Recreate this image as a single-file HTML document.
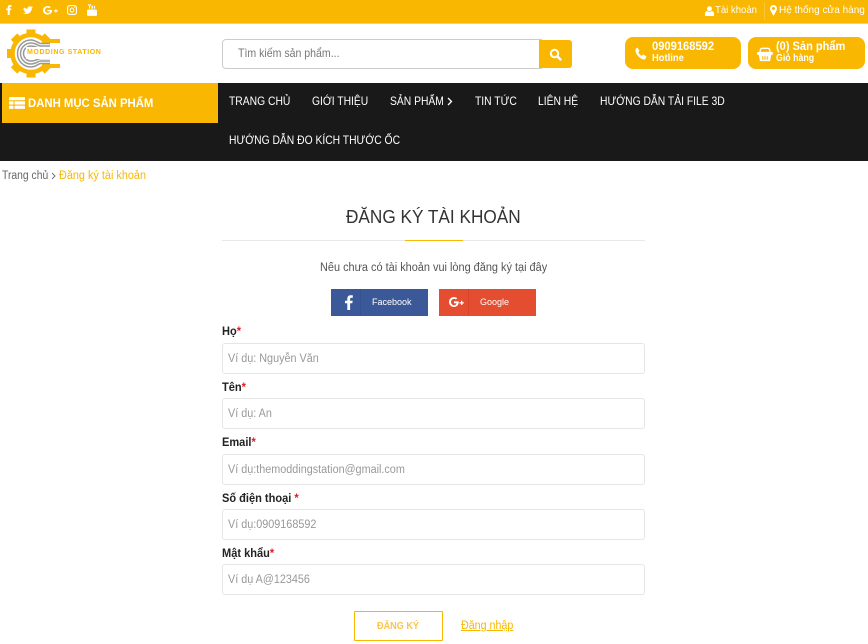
<!DOCTYPE html>
<html><head><meta charset="utf-8"><style>
html,body{margin:0;padding:0;background:#fff}
body{width:868px;height:644px;position:relative;overflow:hidden;font-family:"Liberation Sans","Noto Sans CJK SC",sans-serif;color:#333}
.a{position:absolute;white-space:nowrap;transform-origin:left center}
svg{position:absolute;display:block}
.nav{color:#fff;font-size:12px;line-height:16px;transform:scaleX(.86)}
.lab{font-size:12px;font-weight:bold;color:#222;left:222px;line-height:14px;transform:scaleX(.92)}
.lab b{color:#e01b24}
.inp{position:absolute;left:222px;width:421px;height:29px;border:1px solid #e6e6e6;border-radius:3px;background:#fff}
.inp span{position:absolute;left:5px;top:0;font-size:11.5px;line-height:30px;color:#999;white-space:nowrap;transform:scaleX(.94);transform-origin:left center}
.card{position:absolute;top:37px;height:32px;background:#f9b701;border-radius:8px}
</style></head><body>

<div class="a" style="left:0;top:0;width:868px;height:23px;background:#f9b701"></div>
<div class="a" style="left:0;top:23px;width:868px;height:1px;background:#fbd35c"></div>
<svg style="left:0;top:0" width="110" height="22" viewBox="0 0 110 22" fill="#fff">
<path transform="translate(6,4.500) scale(.85,.8)" d="M2 13V7H0V5h2V3.500C2 1.500 3 .6 4.800.6H6.500V3H5.300C4.600 3 4.400 3.300 4.400 4V5h2L6 7H4.400v6z"/>
<path transform="translate(9.600,4.500) scale(.8,.74)" d="M18 4c1 .7 2.500 1.700 4.500 1.700C22.300 3 25 1.300 27 3c.7-.1 1.300-.4 1.800-.7-.2.7-.6 1.200-1.200 1.600.6 0 1-.2 1.600-.4-.4.600-.9 1.100-1.500 1.500C27.700 10 24 13 20.500 12.800c-1.300 0-2.600-.4-3.700-1.100 1.300.1 2.800-.3 3.800-1.100-1.200 0-2.100-.8-2.400-1.800.4 0 .8 0 1.100-.1-1.300-.3-2.200-1.400-2.200-2.600.4.200.8.300 1.200.3C17 5.500 17.500 4.700 18 4z"/>
<path transform="translate(9.100,4.700) scale(.88,.8)" d="M43.500 6.500h5.300c.3 3.500-1.700 5.900-5 5.900-3.200 0-5.300-2.500-5.300-5.400s2.300-5.400 5.300-5.400c1.400 0 2.600.5 3.500 1.400L45.800 4.500C43.800 2.800 40.900 4 40.900 7s3 4.200 4.900 2.800c.6-.4.800-.9.900-1.400h-3.200zM52.500 5.500h1.300v1.600h1.600v1.200h-1.600v1.600h-1.300V8.300h-1.600V7.100h1.600z"/>
<path transform="translate(21.500,4.200) scale(.74,.8)" fill-rule="evenodd" d="M65 1h6.500A3.500 3.500 0 0 1 75 4.500V10a3.500 3.500 0 0 1-3.500 3.500H65A3.500 3.500 0 0 1 61.500 10V4.500A3.500 3.500 0 0 1 65 1zm.2 1.400A2.200 2.200 0 0 0 63 4.600v5.300a2.200 2.200 0 0 0 2.200 2.200h6.100a2.200 2.200 0 0 0 2.200-2.200V4.600a2.200 2.200 0 0 0-2.200-2.200zm3 1.700a3.200 3.200 0 1 1 0 6.400 3.200 3.200 0 0 1 0-6.400zm0 1.300a1.900 1.900 0 1 0 0 3.800 1.900 1.900 0 0 0 0-3.800zM71.700 3a.8.800 0 1 1 0 1.600.8.800 0 0 1 0-1.600z"/>
<g transform="translate(5,4) scale(1,.85)"><rect x="82" y="6.500" width="10" height="7.500" rx="1.500"/>
<path d="M83 0h1l.6 2 .6-2h1l-1.100 3v2.500h-1V3zM86.500 2h1.500v3.500h-1.500zM89 2h1v3.500h-1z"/></g>
</svg>
<svg style="left:705px;top:6px" width="9" height="10" viewBox="0 0 10 11" fill="#fff"><circle cx="5" cy="3" r="2.800"/><path d="M0 11V8.500C0 6.500 1.500 5.500 2.500 5.500 3.200 6.200 4 6.500 5 6.500s1.800-.3 2.500-1c1 0 2.500 1 2.500 3V11z"/></svg>
<div class="a" style="left:715px;top:4px;font-size:10.5px;line-height:13px;color:#fff;transform:scaleX(.91)">Tài khoản</div>
<div class="a" style="left:764px;top:2px;width:1px;height:18px;background:#fac53a"></div>
<svg style="left:770px;top:5px" width="7" height="11" viewBox="0 0 7 11"><path fill="#fff" fill-rule="evenodd" d="M3.500 0A3.500 3.500 0 0 1 7 3.500C7 5.500 4.500 9 3.500 11 2.500 9 0 5.500 0 3.500A3.500 3.500 0 0 1 3.500 0zm0 2a1.500 1.500 0 1 0 0 3 1.500 1.500 0 0 0 0-3z"/></svg>
<div class="a" style="left:779px;top:4px;font-size:10.5px;line-height:13px;color:#fff;transform:scaleX(.955)">Hệ thống cửa hàng</div>

<svg style="left:0;top:24px" width="62" height="58" viewBox="0 24 62 58">
<g fill="#f9b701">
<circle cx="31" cy="53.500" r="18.500" fill="none" stroke="#f9b701" stroke-width="4.500"/>
<rect x="26.500" y="29.500" width="9" height="6"/>
<rect x="26.500" y="29.500" width="9" height="6" transform="rotate(180 31 53.500)"/>
<rect x="26.500" y="29.500" width="9" height="6" transform="rotate(-90 31 53.500)"/>
<rect x="26.500" y="29.500" width="9" height="6" transform="rotate(45 31 53.500)"/>
<rect x="26.500" y="29.500" width="9" height="6" transform="rotate(-45 31 53.500)"/>
<rect x="26.500" y="29.500" width="9" height="6" transform="rotate(-135 31 53.500)"/>
<rect x="26.500" y="29.500" width="9" height="6" transform="rotate(135 31 53.500)"/>
</g>
<rect x="41" y="43" width="21" height="21" fill="#fff"/>
<rect x="42" y="39" width="18" height="4" fill="#f9b701"/>
<rect x="42" y="64" width="18" height="4" fill="#f9b701"/>
<g fill="none" stroke="#999" stroke-width="1.500">
<path d="M50 43.500H41C38 43.500 36 40 31 40A13.500 13.500 0 0 0 31 67C36 67 38 63.500 41 63.500h9"/>
<path d="M50 46H41C38 46 36 43 31 43A10.500 10.500 0 0 0 31 64C36 64 38 61 41 61h9"/>
<path d="M50 48.500H41C38 48.500 36 46 31 46A7.500 7.500 0 0 0 31 61C36 61 38 58.500 41 58.500h9"/>
</g>
</svg>
<div class="a" style="left:26px;top:47px;font-size:7px;line-height:12px;font-weight:bold;color:#f9b701;letter-spacing:.6px;background:#fff;padding-left:1px">MODDING STATION</div>

<div class="a" style="left:222px;top:39px;width:318px;height:28px;border:1px solid #ccc;border-radius:4px 0 0 4px;background:#fff"></div>
<div class="a" style="left:238px;top:46px;font-size:12px;line-height:15px;color:#777;transform:scaleX(.88)">Tìm kiếm sản phẩm...</div>
<div class="a" style="left:539px;top:40px;width:33px;height:28px;background:#f9b701;border-radius:0 3px 3px 0"></div>
<svg style="left:549px;top:48px" width="13" height="13" viewBox="0 0 13 13"><circle cx="5.500" cy="5.500" r="3.700" fill="none" stroke="#fff" stroke-width="2"/><path d="M8.500 8.500l3 3" stroke="#fff" stroke-width="2.400" stroke-linecap="round"/></svg>

<div class="card" style="left:625px;width:116px"></div>
<svg style="left:635px;top:47px" width="12" height="13" viewBox="0 0 12 13"><path fill="#fff" d="M2.500.5L4.500 3.800 3.300 5.200C4 6.800 5.200 8 6.800 8.800L8.200 7.500 11.500 9.500 10.500 11.800C10 12.500 9 12.700 8 12.400 4.500 11.300 1.500 8 .5 4.500.2 3.400.5 2.300 1 1.500z"/></svg>
<div class="a" style="left:652px;top:39px;font-size:12px;line-height:14px;font-weight:bold;color:#fff;transform:scaleX(.93)">0909168592</div>
<div class="a" style="left:652px;top:53px;font-size:10px;line-height:12px;font-weight:bold;color:#fff;transform:scaleX(.94)">Hotline</div>

<div class="card" style="left:748px;width:117px"></div>
<svg style="left:757px;top:47px" width="16" height="15" viewBox="0 0 18 17" fill="none" stroke="#fff"><path stroke-width="1.500" d="M3.500 7V4.500C3.500 2.500 4.500 1.500 6 1.500h6c1.500 0 2.500 1 2.500 3V7"/><rect x=".5" y="6" width="17" height="2.500" rx="1" fill="#fff"/><path fill="#fff" stroke="none" d="M2 9h14l-1.200 7H3.200z"/><path stroke="#f9b701" d="M6 10.500v4M8 10.500v4M10 10.500v4M12 10.500v4"/></svg>
<div class="a" style="left:776px;top:39px;font-size:12px;line-height:14px;font-weight:bold;color:#fff;transform:scaleX(.92)">(0) Sản phẩm</div>
<div class="a" style="left:776px;top:53px;font-size:10px;line-height:12px;font-weight:bold;color:#fff;transform:scaleX(.88)">Giỏ hàng</div>

<div class="a" style="left:0;top:83px;width:868px;height:78px;background:#191919"></div>
<div class="a" style="left:2px;top:83px;width:216px;height:40px;background:#f9b701"></div>
<svg style="left:9px;top:97px" width="16" height="12" viewBox="0 0 16 12" fill="#fff"><rect width="16" height="3.300" rx=".8"/><rect y="4.300" width="4.500" height="3.300"/><rect x="5.500" y="4.300" width="10.500" height="3.300"/><rect y="8.600" width="4.500" height="3.300" rx=".8"/><rect x="5.500" y="8.600" width="10.500" height="3.300" rx=".8"/></svg>
<div class="a" style="left:28px;top:95px;font-size:12px;line-height:16px;font-weight:bold;color:#fff;transform:scaleX(.945)">DANH MỤC SẢN PHẨM</div>

<div class="a nav" style="left:229px;top:93px">TRANG CHỦ</div>
<div class="a nav" style="left:312px;top:93px">GIỚI THIỆU</div>
<div class="a nav" style="left:390px;top:93px">SẢN PHẨM</div>
<svg style="left:447px;top:97px" width="6" height="9" viewBox="0 0 6 9"><path d="M1 1l3.500 3.500L1 8" fill="none" stroke="#fff" stroke-width="1.300"/></svg>
<div class="a nav" style="left:475px;top:93px">TIN TỨC</div>
<div class="a nav" style="left:538px;top:93px">LIÊN HỆ</div>
<div class="a nav" style="left:600px;top:93px">HƯỚNG DẪN TẢI FILE 3D</div>
<div class="a nav" style="left:229px;top:132px">HƯỚNG DẪN ĐO KÍCH THƯỚC ỐC</div>

<div class="a" style="left:2px;top:169px;font-size:11.5px;line-height:14px;color:#666;transform:scaleX(.9)">Trang chủ</div>
<svg style="left:51px;top:172px" width="5" height="8" viewBox="0 0 5 8"><path d="M1 1l3 3-3 3" fill="none" stroke="#777" stroke-width="1"/></svg>
<div class="a" style="left:59px;top:169px;font-size:11.5px;line-height:14px;color:#f9b701;transform:scaleX(.945)">Đăng ký tài khoản</div>

<div class="a" style="left:346px;top:205px;font-size:18px;line-height:24px;color:#333;transform:scaleX(.956)">ĐĂNG KÝ TÀI KHOẢN</div>
<div class="a" style="left:222px;top:240px;width:423px;height:1px;background:#e8e8e8"></div>
<div class="a" style="left:405px;top:240px;width:58px;height:1px;background:#f9b701"></div>
<div class="a" style="left:320px;top:261px;font-size:11.5px;line-height:14px;color:#555;transform:scaleX(.95)">Nếu chưa có tài khoản vui lòng đăng ký tại đây</div>

<div class="a" style="left:331px;top:289px;width:97px;height:27px;background:#3b5998"></div>
<div class="a" style="left:360px;top:289px;width:1px;height:27px;background:#36528c"></div>
<svg style="left:345px;top:295px" width="8" height="15" viewBox="0 0 8 15"><path fill="#fff" d="M2.300 15V8.300H0V5.700h2.300V3.800C2.300 1.400 3.700.2 5.700.2H7.800v2.600H6.400c-1 0-1.300.5-1.300 1.200v1.700h2.600l-.4 2.600H5.100V15z"/></svg>
<div class="a" style="left:372px;top:296px;font-size:9px;line-height:13px;color:#fff">Facebook</div>

<div class="a" style="left:439px;top:289px;width:97px;height:27px;background:#e44d30"></div>
<div class="a" style="left:468px;top:289px;width:1px;height:27px;background:#d64529"></div>
<svg style="left:449px;top:297px" width="16" height="11" viewBox="0 0 16 11"><path fill="#fff" d="M5 4.400h4.700c.3 3.200-1.500 5.600-4.700 5.600C2.300 10 0 7.800 0 5s2.300-5 5-5c1.300 0 2.400.5 3.200 1.200L6.900 2.500C5.200 1 2 2.100 2 5s3.200 4.100 4.800 2.600c.4-.4.600-.8.700-1.300H5zM12 3.800h1.300v1.500h1.500v1.200h-1.500V8H12V6.500h-1.500V5.300H12z"/></svg>
<div class="a" style="left:480px;top:296px;font-size:9px;line-height:13px;color:#fff">Google</div>

<div class="a lab" style="top:324px">Họ<b>*</b></div>
<div class="inp" style="top:343px"><span>Ví dụ: Nguyễn Văn</span></div>
<div class="a lab" style="top:380px">Tên<b>*</b></div>
<div class="inp" style="top:398px"><span>Ví dụ: An</span></div>
<div class="a lab" style="top:435px">Email<b>*</b></div>
<div class="inp" style="top:454px"><span>Ví dụ:themoddingstation@gmail.com</span></div>
<div class="a lab" style="top:491px">Số điện thoại <b>*</b></div>
<div class="inp" style="top:509px"><span>Ví dụ:0909168592</span></div>
<div class="a lab" style="top:546px">Mật khẩu<b>*</b></div>
<div class="inp" style="top:564px"><span>Ví dụ A@123456</span></div>

<div class="a" style="left:354px;top:611px;width:87px;height:28px;border:1px solid #f9b701;border-radius:1px;background:#fff"></div>
<div class="a" style="left:377px;top:621px;line-height:12px;font-size:10px;font-weight:bold;color:#fbc44a;transform:scaleX(.91)">ĐĂNG KÝ</div>
<div class="a" style="left:461px;top:619px;font-size:11.5px;line-height:14px;color:#f9b701;text-decoration:underline;transform:scaleX(.93)">Đăng nhập</div>
</body></html>
